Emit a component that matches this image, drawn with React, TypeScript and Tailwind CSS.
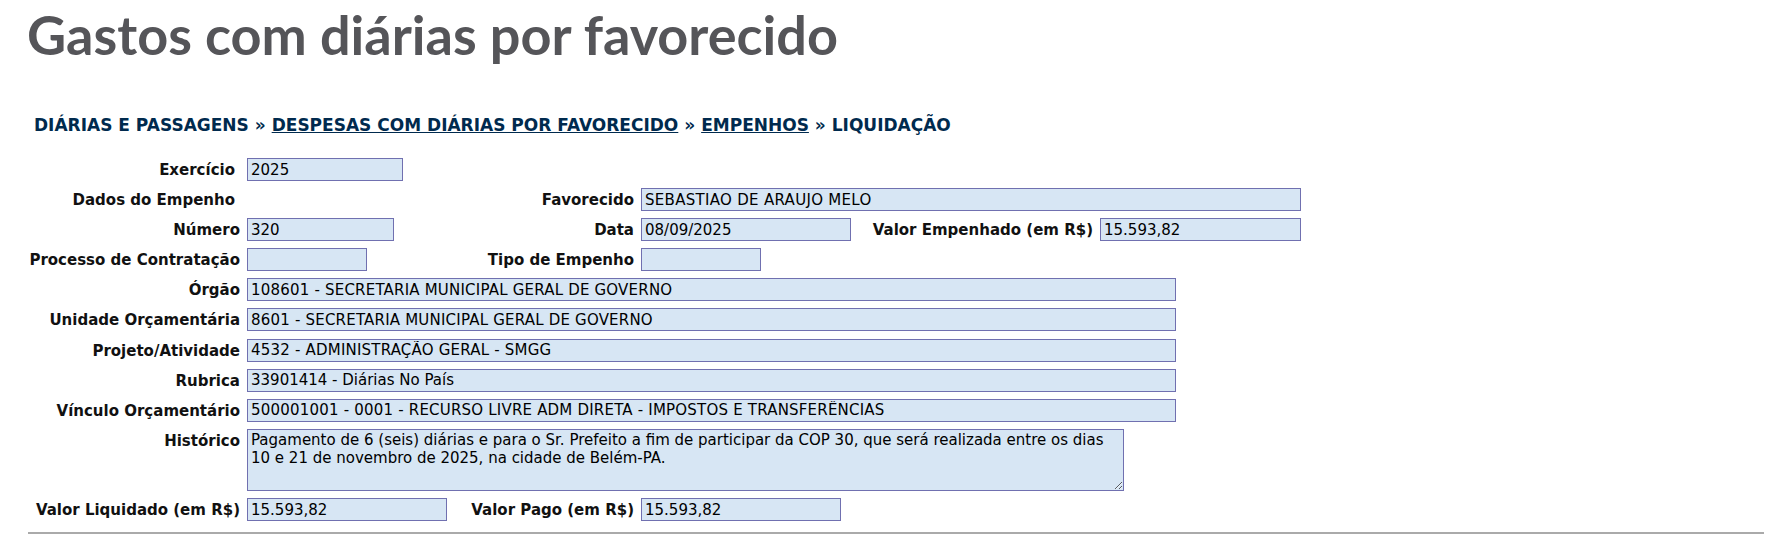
import React from 'react';

const font = { fontFamily: '"DejaVu Sans", Verdana, sans-serif' };

const Label: React.FC<{ children: React.ReactNode; className?: string }> = ({ children, className = '' }) => (
  <div className={`flex justify-end font-bold text-[15px] leading-normal whitespace-nowrap text-[#111] pt-px ${className}`}>
    <span>{children}</span>
  </div>
);

const Field: React.FC<{ value?: string; className?: string }> = ({ value = '', className = '' }) => (
  <input
    readOnly
    value={value}
    className={`block h-[23px] bg-[#d7e6f4] border border-[#7070b0] px-[3px] py-0 text-[15px] text-black outline-none ${className}`}
    style={font}
  />
);

export default function App() {
  return (
    <div className="w-[1792px] h-[538px] bg-white px-[28px] overflow-hidden" style={font}>
      <h1
        className="mt-[8px] text-[54px] leading-none font-bold text-[#555559] -ml-[1px]"
        style={{ fontFamily: 'Lato, sans-serif' }}
      >
        Gastos com diárias por favorecido
      </h1>

      <div className="mt-[55px] ml-[6px] text-[17px] leading-none font-bold text-[#002a4e] whitespace-nowrap">
        DIÁRIAS E PASSAGENS »{' '}
        <a href="#" className="underline">DESPESAS COM DIÁRIAS POR FAVORECIDO</a> »{' '}
        <a href="#" className="underline">EMPENHOS</a> » LIQUIDAÇÃO
      </div>

      <div className="mt-[24px] grid grid-cols-[212px_215px_165px_223px_222px_201px] gap-x-[7px] gap-y-[6.6px] items-start">
        {/* Exercício */}
        <Label className="pr-[5px]">Exercício</Label>
        <div className="col-span-5">
          <Field value="2025" className="w-[156px]" />
        </div>

        {/* Dados do Empenho */}
        <Label className="pr-[5px]">Dados do Empenho</Label>
        <div />
        <Label>Favorecido</Label>
        <div className="col-span-3">
          <Field value="SEBASTIAO DE ARAUJO MELO" className="w-full tracking-[0.3px]" />
        </div>

        {/* Número */}
        <Label>Número</Label>
        <div>
          <Field value="320" className="w-[147px]" />
        </div>
        <Label>Data</Label>
        <div>
          <Field value="08/09/2025" className="w-[210px]" />
        </div>
        <Label>Valor Empenhado (em R$)</Label>
        <div>
          <Field value="15.593,82" className="w-full" />
        </div>

        {/* Processo */}
        <Label>Processo de Contratação</Label>
        <div>
          <Field className="w-[120px]" />
        </div>
        <Label>Tipo de Empenho</Label>
        <div className="col-span-3">
          <Field className="w-[120px]" />
        </div>

        <Label>Órgão</Label>
        <div className="col-span-5">
          <Field value="108601 - SECRETARIA MUNICIPAL GERAL DE GOVERNO" className="w-[929px] tracking-[0.2px]" />
        </div>

        <Label>Unidade Orçamentária</Label>
        <div className="col-span-5">
          <Field value="8601 - SECRETARIA MUNICIPAL GERAL DE GOVERNO" className="w-[929px] tracking-[0.2px]" />
        </div>

        <Label>Projeto/Atividade</Label>
        <div className="col-span-5">
          <Field value="4532 - ADMINISTRAÇÃO GERAL - SMGG" className="w-[929px] tracking-[0.2px]" />
        </div>

        <Label>Rubrica</Label>
        <div className="col-span-5">
          <Field value="33901414 - Diárias No País" className="w-[929px]" />
        </div>

        <Label>Vínculo Orçamentário</Label>
        <div className="col-span-5">
          <Field
            value="500001001 - 0001 - RECURSO LIVRE ADM DIRETA - IMPOSTOS E TRANSFERÊNCIAS"
            className="w-[929px] tracking-[0.2px]"
          />
        </div>

        <Label>Histórico</Label>
        <div className="col-span-5">
          <textarea
            readOnly
            value={
              'Pagamento de 6 (seis) diárias e para o Sr. Prefeito a fim de participar da COP 30, que será realizada entre os dias\n10 e 21 de novembro de 2025, na cidade de Belém-PA.'
            }
            className="block w-[877px] h-[62px] bg-[#d7e6f4] border border-[#7070b0] px-[3px] py-[1px] text-[15px] leading-[18px] text-black outline-none"
            style={font}
          />
        </div>

        <Label className="mt-px">Valor Liquidado (em R$)</Label>
        <div className="mt-px">
          <Field value="15.593,82" className="w-[200px]" />
        </div>
        <Label className="mt-px">Valor Pago (em R$)</Label>
        <div className="col-span-3 mt-px">
          <Field value="15.593,82" className="w-[200px]" />
        </div>
      </div>

      <div className="mt-[10px] border-t-2 border-[#aaaaaa]" />
    </div>
  );
}
